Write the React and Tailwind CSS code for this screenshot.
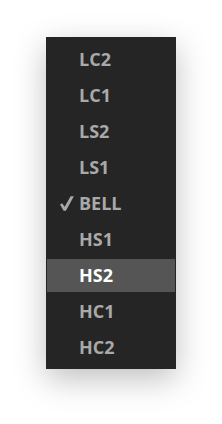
import { useState } from "react";

const items = ["LC2", "LC1", "LS2", "LS1", "BELL", "HS1", "HS2", "HC1", "HC2"];

export default function App() {
  const [selected] = useState("BELL");
  const [hovered, setHovered] = useState("HS2");

  return (
    <div className="min-h-screen bg-white pt-[37px] pl-[46px]">
      <div className="w-[130px] bg-[#252525] py-1 px-px shadow-[0_10px_30px_rgba(0,0,0,0.25)]">
        {items.map((item) => (
          <div key={item} className="h-9 flex items-center" onMouseEnter={() => setHovered(item)}>
            <div
              className={
                "h-[33px] w-full flex items-center font-['Open_Sans',sans-serif] font-bold text-[18px] " +
                (hovered === item ? "bg-[#555555] text-white" : "text-[#a9a9a9]")
              }
            >
              <div className="w-[32px] flex justify-end pr-[5px]">
                {selected === item && (
                  <svg width="14" height="15" viewBox="0 0 14 15">
                    <polygon points="0,8.4 2.1,7.2 4.7,10.8 10.6,0.2 13.9,0.2 5.9,14.8 3.6,14.8" fill="#a9a9a9" />
                  </svg>
                )}
              </div>
              <span className="leading-none">{item}</span>
            </div>
          </div>
        ))}
      </div>
    </div>
  );
}
